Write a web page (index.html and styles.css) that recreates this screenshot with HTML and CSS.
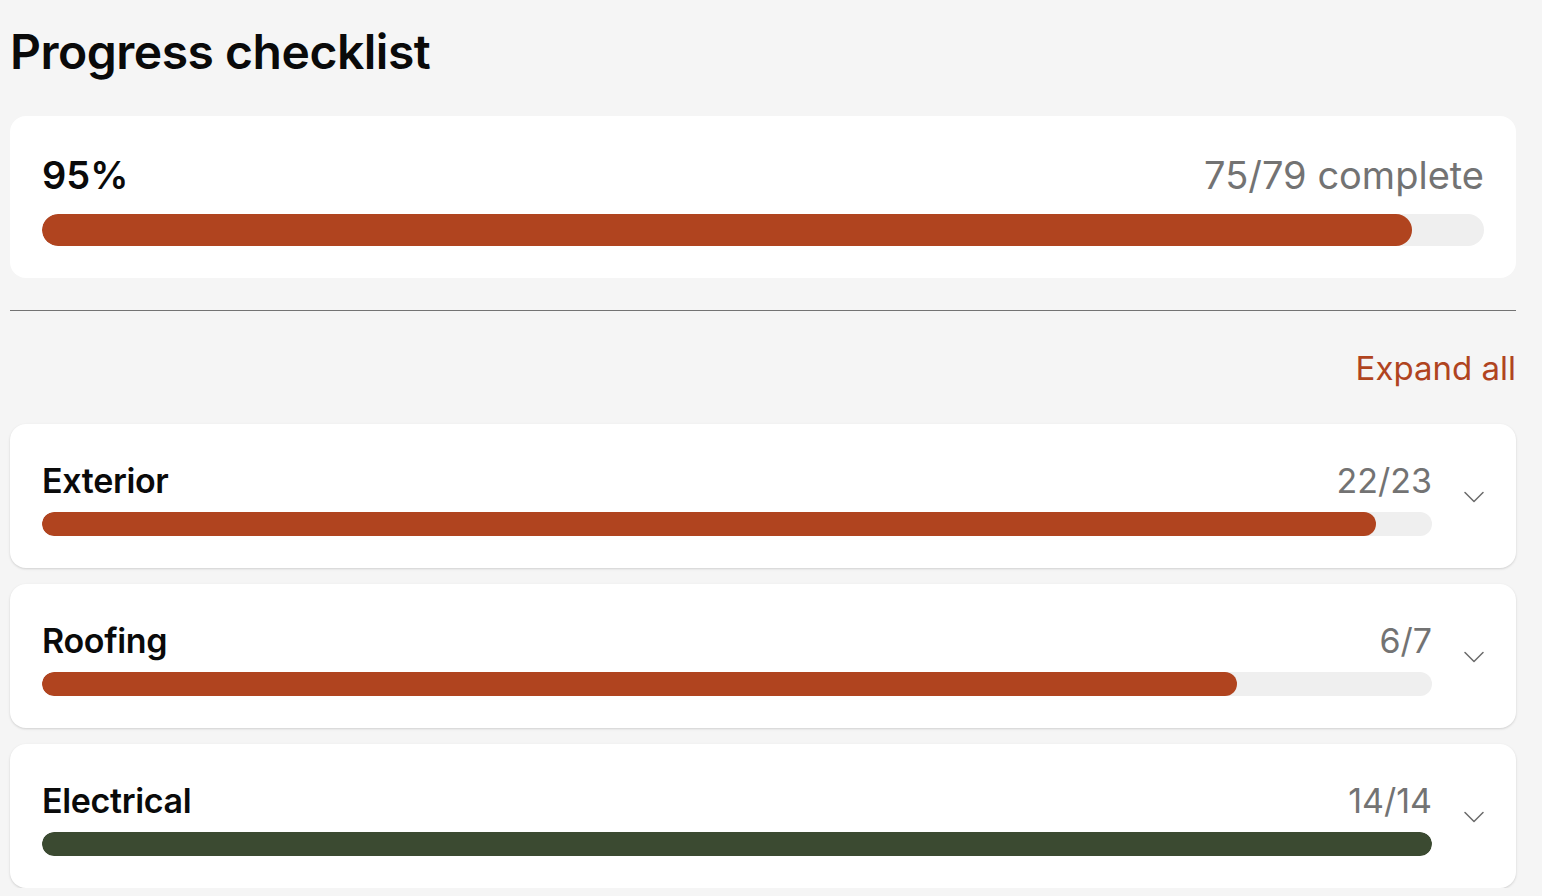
FILE: index.html
```html
<!DOCTYPE html>
<html lang="en">
<head>
<meta charset="utf-8">
<title>Progress checklist</title>
<link rel="stylesheet" href="styles.css">
</head>
<body>
<main class="page">
  <h1 class="title">Progress checklist</h1>

  <section class="summary">
    <div class="row">
      <span class="pct">95%</span>
      <span class="complete">75/79 complete</span>
    </div>
    <div class="track track-lg"><div class="fill fill-orange" style="width:95%"></div></div>
  </section>

  <hr class="divider">

  <div class="actions"><button class="expand" type="button">Expand all</button></div>

  <div class="list">
    <article class="cat">
      <div class="cat-body">
        <div class="row row-cat">
          <span class="cat-name">Exterior</span>
          <span class="cat-count">22/23</span>
        </div>
        <div class="track track-sm"><div class="fill fill-orange" style="width:96%"></div></div>
      </div>
      <span class="chev"><svg width="20" height="12" viewBox="0 0 20 12" fill="none"><path d="M1 1.5 L10 10.5 L19 1.5" stroke="#6b6b6b" stroke-width="1.5" stroke-linecap="round" stroke-linejoin="round"/></svg></span>
    </article>

    <article class="cat">
      <div class="cat-body">
        <div class="row row-cat">
          <span class="cat-name">Roofing</span>
          <span class="cat-count">6/7</span>
        </div>
        <div class="track track-sm"><div class="fill fill-orange" style="width:86%"></div></div>
      </div>
      <span class="chev"><svg width="20" height="12" viewBox="0 0 20 12" fill="none"><path d="M1 1.5 L10 10.5 L19 1.5" stroke="#6b6b6b" stroke-width="1.5" stroke-linecap="round" stroke-linejoin="round"/></svg></span>
    </article>

    <article class="cat">
      <div class="cat-body">
        <div class="row row-cat">
          <span class="cat-name">Electrical</span>
          <span class="cat-count">14/14</span>
        </div>
        <div class="track track-sm"><div class="fill fill-green" style="width:100%"></div></div>
      </div>
      <span class="chev"><svg width="20" height="12" viewBox="0 0 20 12" fill="none"><path d="M1 1.5 L10 10.5 L19 1.5" stroke="#6b6b6b" stroke-width="1.5" stroke-linecap="round" stroke-linejoin="round"/></svg></span>
    </article>
  </div>
</main>
</body>
</html>
```

FILE: styles.css
```css
* { box-sizing: border-box; }

html, body {
  margin: 0;
  padding: 0;
  background: #f5f5f5;
  font-family: "Inter", "Liberation Sans", sans-serif;
  color: #0a0a0a;
}

.page {
  padding: 25px 26px 0 10px;
}

.title {
  margin: 0 0 38px;
  font-size: 48px;
  line-height: 53px;
  font-weight: 600;
  letter-spacing: -0.01em;
}

.summary {
  background: #fff;
  border-radius: 16px;
  padding: 32px;
  display: flex;
  flex-direction: column;
  gap: 12px;
}

.row {
  display: flex;
  justify-content: space-between;
  align-items: center;
  height: 54px;
}

.pct {
  font-size: 38px;
  font-weight: 600;
}

.complete {
  font-size: 38px;
  color: #737373;
}

.track {
  background: #efefef;
  border-radius: 999px;
  overflow: hidden;
}

.track-lg { height: 32px; }
.track-sm { height: 24px; }

.fill {
  height: 100%;
  border-radius: 999px;
}

.fill-orange { background: #b0441f; }
.fill-green { background: #3b4a31; }

.divider {
  margin: 32px 0 0;
  border: 0;
  border-top: 1px solid #737373;
  height: 0;
}

.actions {
  display: flex;
  justify-content: flex-end;
  padding: 33px 0 32px;
}

.expand {
  background: none;
  border: 0;
  padding: 0;
  font-family: inherit;
  font-size: 33px;
  line-height: 48px;
  color: #b0441f;
  cursor: pointer;
}

.list {
  display: flex;
  flex-direction: column;
  gap: 16px;
}

.cat {
  background: #fff;
  border-radius: 16px;
  box-shadow: 0 1px 3px rgba(0, 0, 0, 0.1), 0 1px 2px rgba(0, 0, 0, 0.06);
  padding: 32px;
  display: flex;
  align-items: center;
  gap: 20px;
  height: 144px;
}

.cat-body {
  flex: 1;
  display: flex;
  flex-direction: column;
  gap: 8px;
}

.row-cat { height: 48px; }

.cat-name {
  font-size: 34px;
  font-weight: 600;
  letter-spacing: -0.01em;
}

.cat-count {
  font-size: 34px;
  color: #737373;
}

.chev {
  width: 32px;
  display: flex;
  justify-content: flex-end;
  align-items: center;
  padding-top: 2px;
}
```
